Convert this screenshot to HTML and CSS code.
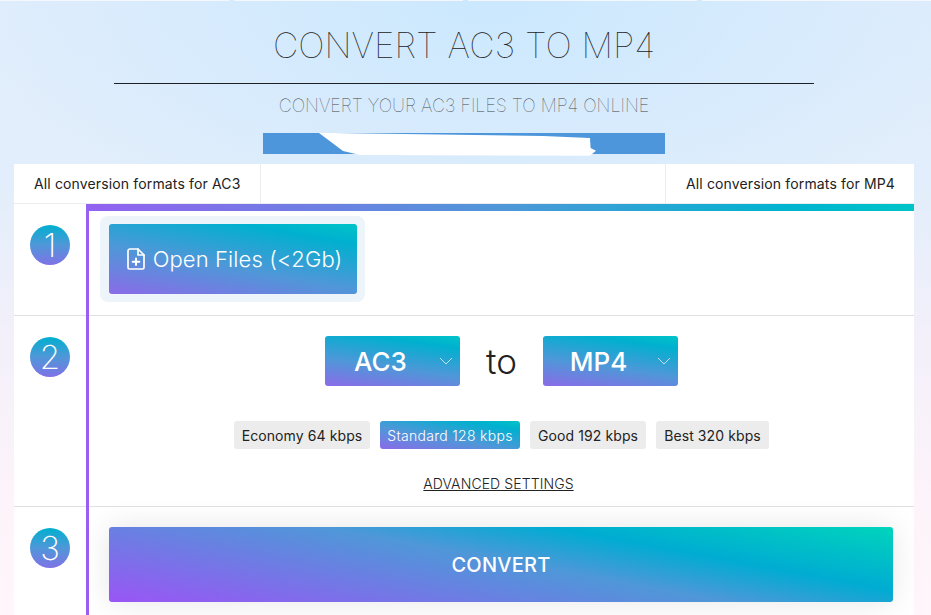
FILE: index.html
```html
<!DOCTYPE html>
<html lang="en">
<head>
<meta charset="utf-8">
<title>Convert AC3 to MP4</title>
<link rel="stylesheet" href="styles.css">
</head>
<body>
<div class="top-strip"><span></span><span></span><span></span><span></span></div>
<header class="hero">
  <h1 class="title">CONVERT AC3 TO MP4</h1>
  <div class="rule"></div>
  <p class="subtitle">CONVERT YOUR AC3 FILES TO MP4 ONLINE</p>
  <div class="banner">
    <svg class="redaction" viewBox="0 0 402 24" width="402" height="24" aria-hidden="true">
      <path d="M56 0L70 0L280 3L327 5L327.600 15L333 17.700L327 22.700L97 22L80 18Z"/>
    </svg>
  </div>
</header>
<main class="card">
  <nav class="formats">
    <a class="format-left">All conversion formats for AC3</a>
    <span class="format-mid"></span>
    <a class="format-right">All conversion formats for MP4</a>
  </nav>
  <section class="step step-one">
    <div class="num-col"><span class="num">1</span></div>
    <div class="body body-one">
      <div class="open-wrap">
        <button class="open-btn">
          <svg class="file-icon" viewBox="0 0 18 22" width="18" height="22" fill="none" stroke="#fff" stroke-width="1.7" stroke-linejoin="round" stroke-linecap="round" aria-hidden="true">
            <path d="M3 1H11L17 7V19.500A1.500 1.500 0 0 1 15.500 21H2.500A1.500 1.500 0 0 1 1 19.500V3A2 2 0 0 1 3 1Z"/>
            <path d="M11 1V7H17"/>
            <path d="M9 10.500V17M5.700 13.700H12.300" stroke-width="2"/>
          </svg>
          <span>Open Files (&lt;2Gb)</span>
        </button>
      </div>
    </div>
  </section>
  <section class="step step-two">
    <div class="num-col"><span class="num">2</span></div>
    <div class="body body-two">
      <div class="selects">
        <div class="select"><span>AC3</span>
          <svg class="chev" viewBox="0 0 14 8" width="14" height="8" aria-hidden="true"><path d="M1 1L7 7L13 1"/></svg>
        </div>
        <span class="to">to</span>
        <div class="select"><span>MP4</span>
          <svg class="chev" viewBox="0 0 14 8" width="14" height="8" aria-hidden="true"><path d="M1 1L7 7L13 1"/></svg>
        </div>
      </div>
      <div class="pills">
        <span class="pill pill-eco">Economy 64 kbps</span>
        <span class="pill pill-std">Standard 128 kbps</span>
        <span class="pill pill-good">Good 192 kbps</span>
        <span class="pill pill-best">Best 320 kbps</span>
      </div>
      <a class="advanced">ADVANCED SETTINGS</a>
    </div>
  </section>
  <section class="step step-three">
    <div class="num-col"><span class="num">3</span></div>
    <div class="body body-three">
      <button class="convert">CONVERT</button>
    </div>
  </section>
</main>
</body>
</html>
```
FILE: styles.css
```css
* { box-sizing: border-box; }
html, body { margin: 0; height: 615px; overflow: hidden; }
body {
  font-family: Inter, "Liberation Sans", sans-serif;
  color: #222;
  background:
    radial-gradient(ellipse 520px 260px at 490px 0, #cbe8fe 0%, rgba(203,232,254,0) 100%),
    linear-gradient(180deg, #e0edfc 0%, #e2eefb 30%, #f3f0fa 55%, #fdf3fa 80%, #fff5fb 100%);
}
.top-strip { display: flex; gap: 5px; height: 1px; }
.top-strip span { flex: 1; background: #f4f8fc; }
.hero { display: flex; flex-direction: column; align-items: center; height: 163px; padding-right: 3px; }
.title {
  margin: 24px 0 0;
  font-size: 35.100px;
  line-height: 40px;
  font-weight: 100;
  color: #222;
  letter-spacing: 0;
}
.rule { width: 700px; height: 1px; margin-top: 18px; background: #1c1f24; }
.subtitle {
  margin: 12px 0 0;
  font-size: 17.900px;
  line-height: 20px;
  font-weight: 100;
  color: #444;
}
.banner { width: 402px; height: 21px; margin-top: 17px; background: #4d96db; }
.redaction { display: block; overflow: visible; fill: #fff; }
.card { margin: 0 17px 0 14px; background: #fff; }
.formats { display: flex; height: 40px; border-bottom: 1px solid #ebedf0; font-size: 14px; line-height: 39px; letter-spacing: .14px; }
.format-left { width: 247px; padding-left: 20px; border-right: 1px solid #ebedf0; }
.format-mid { flex: 1; }
.format-right { width: 249px; padding-left: 20px; border-left: 1px solid #ebedf0; }
.step { display: flex; border-bottom: 1px solid #e0e0e0; }
.step-one { height: 112px; }
.step-two { height: 191px; }
.step-three { height: 120px; border-bottom: 0; }
.num-col { width: 72px; padding: 21px 0 0 16px; }
.num {
  display: flex;
  align-items: center;
  justify-content: center;
  width: 40px;
  height: 40px;
  border-radius: 50%;
  color: #fff;
  font-size: 33px;
  font-weight: 200;
  background: linear-gradient(180deg, #00b0cf 0%, #4f97d8 50%, #7f72e6 100%);
}
.body { flex: 1; border-left: 3px solid #9a5ff2; margin-bottom: -1px; }
.body-one {
  position: relative;
  padding: 12px 0 0 11px;
}
.body-one::before {
  content: "";
  position: absolute;
  left: -3px;
  right: 0;
  top: 0;
  height: 7px;
  background: linear-gradient(90deg, #9361f0 0%, #4f97d8 50%, #00b4cf 85%, #00c4c8 100%);
}
.open-wrap { width: 265px; height: 86px; padding: 8px 8px 8px 9px; border-radius: 8px; background: #edf4fa; }
.open-btn, .select, .pill-std, .convert { color: #fff; }
.open-btn {
  display: flex;
  align-items: center;
  justify-content: center;
  gap: 8px;
  width: 248px;
  height: 70px;
  padding: 0 0 0 3px;
  border: 0;
  border-radius: 3px;
  font: 300 22px Inter, "Liberation Sans", sans-serif;
  letter-spacing: .1px;
  background: linear-gradient(190deg, #00c4c8 0%, #00b0cf 18%, #4f97d8 58%, #8a6be8 100%);
}
.file-icon { flex: none; }
.body-two { display: flex; flex-direction: column; align-items: center; padding: 20px 0 0 0; }
.selects { display: flex; align-items: center; gap: 26px; }
.select {
  position: relative;
  display: flex;
  align-items: center;
  justify-content: center;
  width: 135px;
  height: 50px;
  padding-right: 24px;
  border-radius: 3px;
  font-size: 26px;
  font-weight: 500;
  background: linear-gradient(188deg, #00c4c8 0%, #00b0cf 18%, #4f97d8 60%, #8a6be8 100%);
}
.chev { position: absolute; right: 7px; top: 21px; fill: none; stroke: #c2e2f4; stroke-width: 1; }
.to { width: 31px; text-align: center; font-size: 35px; font-weight: 300; line-height: 50px; }
.pills { display: flex; gap: 10px; margin-top: 35px; letter-spacing: .1px; }
.pill {
  display: flex;
  align-items: center;
  justify-content: center;
  height: 28px;
  border-radius: 3px;
  font-size: 14px;
  background: #ececec;
}
.pill-eco { width: 136px; }
.pill-std { width: 140px; background: linear-gradient(190deg, #00c4c8 0%, #00b0cf 18%, #4f97d8 58%, #8a6be8 100%); font-weight: 300; letter-spacing: .3px; }
.pill-good { width: 116px; }
.pill-best { width: 113px; }
.advanced { margin: 26px 6px 0 0; font-size: 14px; line-height: 18px; font-weight: 300; letter-spacing: .1px; text-decoration: underline; }
.body-three { padding: 20px 21px 0 20px; }
.convert {
  display: block;
  width: 784px;
  height: 75px;
  border: 0;
  border-radius: 3px;
  font: 500 20px Inter, "Liberation Sans", sans-serif;
  letter-spacing: .25px;
  background: linear-gradient(190.500deg, #00d4bc 0%, #00acd2 29%, #4f97d8 48%, #9a55f5 100%);
  box-shadow: 0 0 30px rgba(0,0,0,.1);
}
```
